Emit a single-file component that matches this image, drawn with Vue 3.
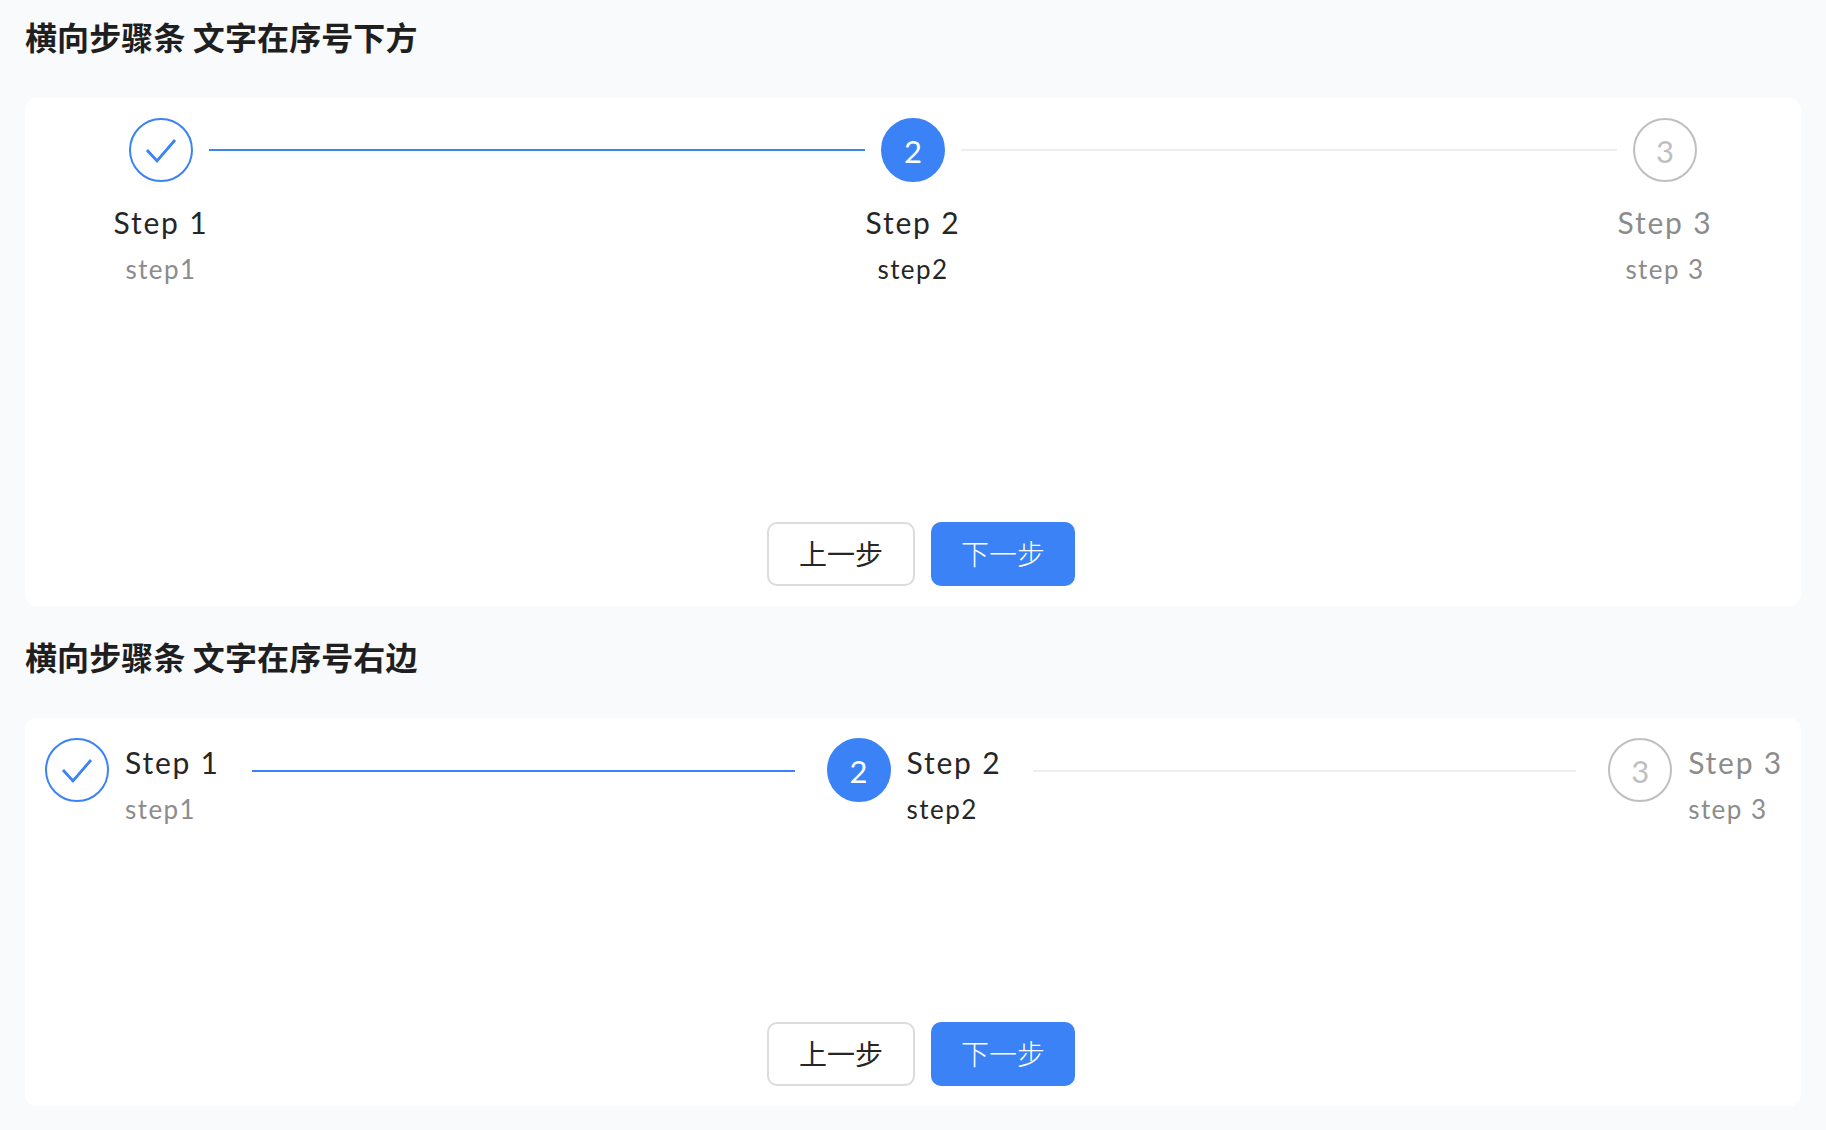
<script setup>
const steps = [
  { num: 1, title: 'Step 1', desc: 'step1', state: 'done' },
  { num: 2, title: 'Step 2', desc: 'step2', state: 'active' },
  { num: 3, title: 'Step 3', desc: 'step 3', state: 'todo' }
]
const sections = [
  { title: '横向步骤条 文字在序号下方', layout: 'below' },
  { title: '横向步骤条 文字在序号右边', layout: 'right' }
]
</script>

<template>
  <div class="page">
    <section v-for="section in sections" :key="section.layout" class="section" :class="section.layout">
      <h2 class="heading">{{ section.title }}</h2>
      <div class="card">
        <div class="steps">
          <template v-for="(step, i) in steps" :key="step.num">
            <div class="step" :class="step.state">
              <div class="circle">
                <svg v-if="step.state === 'done'" class="check" viewBox="0 0 64 64" width="64" height="64">
                  <path d="M18 32 L28 43 L46 22" fill="none" stroke="#3b82f6" stroke-width="2.8" />
                </svg>
                <span v-else class="num">{{ step.num }}</span>
              </div>
              <div class="text">
                <div class="label">{{ step.title }}</div>
                <div class="desc">{{ step.desc }}</div>
              </div>
            </div>
            <div v-if="i < steps.length - 1" class="line" :class="{ on: step.state === 'done' }"></div>
          </template>
        </div>
        <div class="actions">
          <button class="btn">上一步</button>
          <button class="btn primary">下一步</button>
        </div>
      </div>
    </section>
  </div>
</template>

<style>
html, body { margin: 0; background: #f9fafc; }
</style>

<style scoped>
.page {
  min-height: 1130px;
  box-sizing: border-box;
  padding: 0 25px 24px;
  background: #f9fafc;
  font-family: "Lato", "Noto Sans CJK SC", sans-serif;
  color: #262626;
}
.section + .section { margin-top: 14px; }
.heading {
  margin: 0;
  height: 98px;
  padding-top: 16px;
  box-sizing: border-box;
  font-size: 32px;
  line-height: 40px;
  font-weight: 600;
  letter-spacing: 0.1px;
  color: #1f1f1f;
  font-family: "Noto Sans CJK SC", sans-serif;
}
.card {
  box-sizing: border-box;
  display: flex;
  flex-direction: column;
  padding: 20px;
  background: #fff;
  border-radius: 12px;
}
.below .card { height: 508px; padding-left: 104px; padding-right: 104px; }
.right .card { height: 388px; }
.steps { display: flex; }
.right .steps { margin-right: -2px; }
.step { display: flex; flex-shrink: 0; }
.below .step { flex-direction: column; align-items: center; width: 64px; }
.right .step { gap: 16px; }
.circle {
  box-sizing: border-box;
  flex-shrink: 0;
  width: 64px;
  height: 64px;
  border-radius: 50%;
  border: 2px solid #bfbfbf;
  display: flex;
  align-items: center;
  justify-content: center;
  font-size: 31px;
  color: #bfbfbf;
  position: relative;
}
.num { padding-top: 2px; }
.check { position: absolute; left: -2px; top: -2px; }
.done .circle { border-color: #3b82f6; }
.active .circle { border-color: #3b82f6; background: #3b82f6; color: #fff; }
.text { white-space: nowrap; text-align: center; }
.below .text { margin-top: 16px; }
.right .text { text-align: left; }
.label {
  font-size: 30px;
  line-height: 48px;
  letter-spacing: 1.8px;
  color: #262626;
}
.desc {
  font-size: 26px;
  line-height: 46px;
  letter-spacing: 1.45px;
  color: #8c8c8c;
}
.active .desc { color: #262626; }
.todo .label { color: #8c8c8c; }
.line { flex: 1; height: 2px; margin-top: 31px; background: #eeeeee; }
.line.on { background: #3b82f6; }
.below .line { margin-left: 16px; margin-right: 16px; }
.right .line { margin-top: 32px; margin-left: 32px; margin-right: 32px; }
.actions { margin-top: auto; display: flex; justify-content: center; }
.btn {
  box-sizing: border-box;
  height: 64px;
  margin-left: 16px;
  padding: 0 30px 2px;
  border: 2px solid #dcdcdc;
  border-radius: 10px;
  background: #fff;
  color: #262626;
  font-family: "Noto Sans CJK SC", sans-serif;
  font-size: 28px;
  font-weight: 400;
}
.btn.primary { border: 0; background: #3b82f6; color: #fff; font-weight: 300; }
</style>
